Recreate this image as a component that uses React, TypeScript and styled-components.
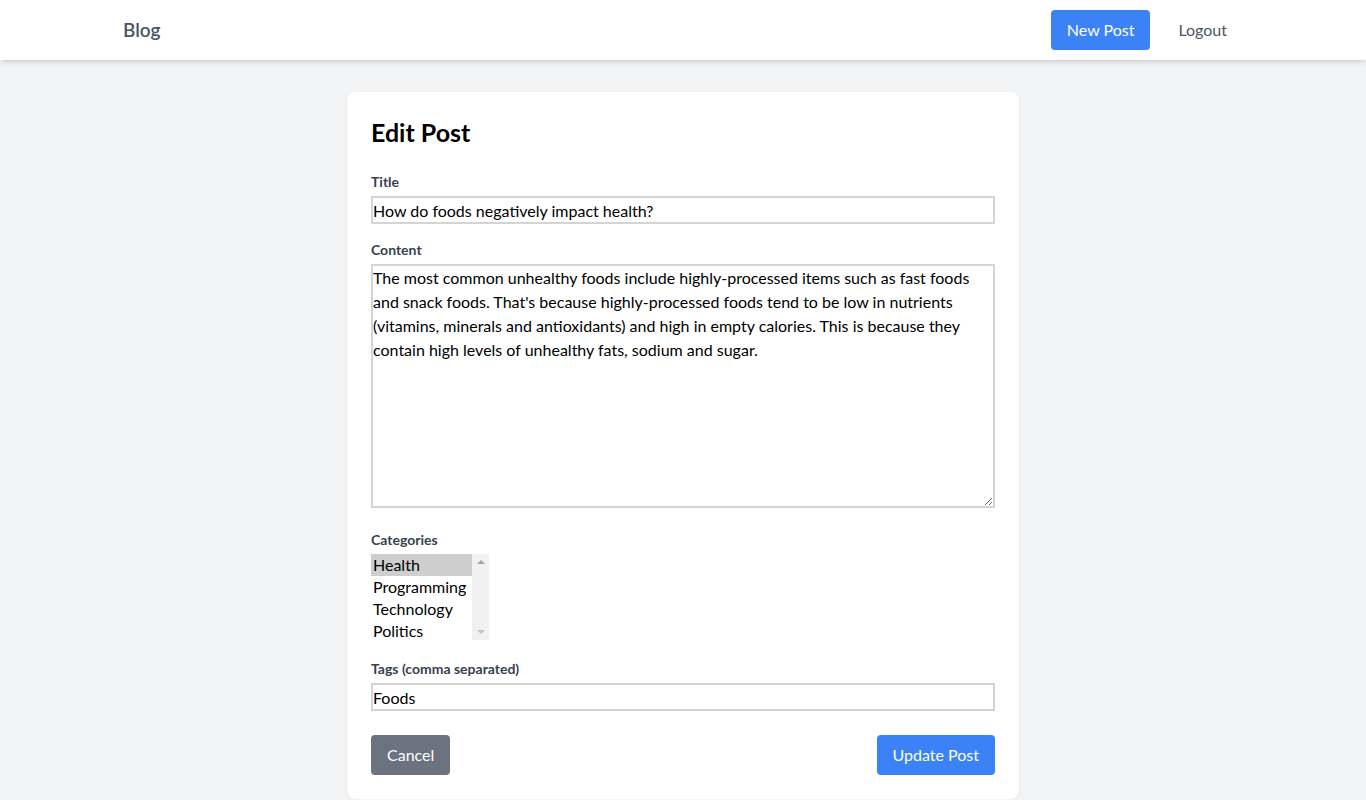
import React from "react";
import styled, { createGlobalStyle } from "styled-components";

const Global = createGlobalStyle`
  * { box-sizing: border-box; }
  body {
    margin: 0;
    background: #f3f4f6;
    font-family: Lato, "Open Sans", sans-serif;
    line-height: 1.5;
    color: #000;
  }
`;

const Nav = styled.nav`
  background: #fff;
  height: 60px;
  box-shadow: 0 4px 6px -1px rgba(0,0,0,0.1), 0 2px 4px -2px rgba(0,0,0,0.1);
`;

const NavInner = styled.div`
  max-width: 1152px;
  margin: 0 auto;
  height: 100%;
  padding: 0 16px;
  display: flex;
  align-items: center;
  justify-content: space-between;
`;

const Brand = styled.a`
  font-size: 19px;
  font-weight: 600;
  color: #4b5563;
  text-decoration: none;
`;

const NavActions = styled.div`
  display: flex;
  align-items: center;
  gap: 12px;
`;

const Button = styled.button<{ $variant?: "primary" | "secondary" }>`
  font-family: inherit;
  font-size: 16px;
  line-height: 24px;
  padding: 8px 16px;
  border: none;
  border-radius: 4px;
  color: #fff;
  background: ${(p) => (p.$variant === "secondary" ? "#6b7280" : "#3b82f6")};
  cursor: pointer;
`;

const NavLink = styled.a`
  font-size: 16px;
  color: #4b5563;
  padding: 8px 16px;
  text-decoration: none;
`;

const Main = styled.main`
  padding-top: 32px;
  display: flex;
  justify-content: center;
`;

const Card = styled.div`
  width: 672px;
  background: #fff;
  border-radius: 8px;
  padding: 24px;
  box-shadow: 0 1px 3px rgba(0,0,0,0.08);
`;

const Heading = styled.h1`
  margin: 0 0 24px;
  font-size: 25px;
  line-height: 32px;
  font-weight: 700;
`;

const Field = styled.div<{ $last?: boolean }>`
  display: flex;
  flex-direction: column;
  align-items: stretch;
  margin-bottom: ${(p) => (p.$last ? "0" : "16px")};
`;

const Label = styled.label`
  display: block;
  font-size: 14px;
  line-height: 20px;
  font-weight: 700;
  color: #374151;
  margin-bottom: 4px;
`;

const TextInput = styled.input`
  display: block;
  width: 100%;
  height: 28px;
  font-family: inherit;
  font-size: 16px;
  padding: 0;
  border: 2px solid #d4d4d4;
  color: #000;
  outline: none;
`;

const TextArea = styled.textarea`
  display: block;
  width: 100%;
  height: 244px;
  font-family: inherit;
  font-size: 16px;
  line-height: 24px;
  padding: 0;
  border: 2px solid #d4d4d4;
  color: #000;
  resize: vertical;
  outline: none;
  margin-bottom: 6px;
`;

const ListBox = styled.div`
  display: flex;
  width: 118px;
  height: 86px;
  margin-bottom: 3px;
`;

const Options = styled.div`
  flex: 1;
  overflow: hidden;
`;

const Option = styled.div<{ $selected?: boolean }>`
  font-size: 16px;
  line-height: 22px;
  height: 22px;
  padding: 0 2px;
  white-space: nowrap;
  background: ${(p) => (p.$selected ? "#cecece" : "transparent")};
`;

const ScrollTrack = styled.div`
  width: 17px;
  background: #f1f1f1;
  display: flex;
  flex-direction: column;
  justify-content: space-between;
  align-items: center;
  padding: 6px 0;
`;

const Arrow = styled.div<{ $down?: boolean }>`
  width: 0;
  height: 0;
  border-left: 4px solid transparent;
  border-right: 4px solid transparent;
  ${(p) =>
    p.$down
      ? "border-top: 4px solid #c4c4c4;"
      : "border-bottom: 4px solid #a3a3a3;"}
`;

const Actions = styled.div`
  display: flex;
  justify-content: space-between;
  margin-top: 24px;
`;

const content =
  "The most common unhealthy foods include highly-processed items such as fast foods and snack foods. That's because highly-processed foods tend to be low in nutrients (vitamins, minerals and antioxidants) and high in empty calories. This is because they contain high levels of unhealthy fats, sodium and sugar.";

export default function App() {
  return (
    <>
      <Global />
      <Nav>
        <NavInner>
          <Brand href="#">Blog</Brand>
          <NavActions>
            <Button>New Post</Button>
            <NavLink href="#">Logout</NavLink>
          </NavActions>
        </NavInner>
      </Nav>
      <Main>
        <Card>
          <Heading>Edit Post</Heading>
          <Field>
            <Label>Title</Label>
            <TextInput defaultValue="How do foods negatively impact health?" />
          </Field>
          <Field>
            <Label>Content</Label>
            <TextArea defaultValue={content} />
          </Field>
          <Field>
            <Label>Categories</Label>
            <ListBox>
              <Options>
                <Option $selected>Health</Option>
                <Option>Programming</Option>
                <Option>Technology</Option>
                <Option>Politics</Option>
              </Options>
              <ScrollTrack>
                <Arrow />
                <Arrow $down />
              </ScrollTrack>
            </ListBox>
          </Field>
          <Field $last>
            <Label>Tags (comma separated)</Label>
            <TextInput defaultValue="Foods" />
          </Field>
          <Actions>
            <Button $variant="secondary">Cancel</Button>
            <Button>Update Post</Button>
          </Actions>
        </Card>
      </Main>
    </>
  );
}
